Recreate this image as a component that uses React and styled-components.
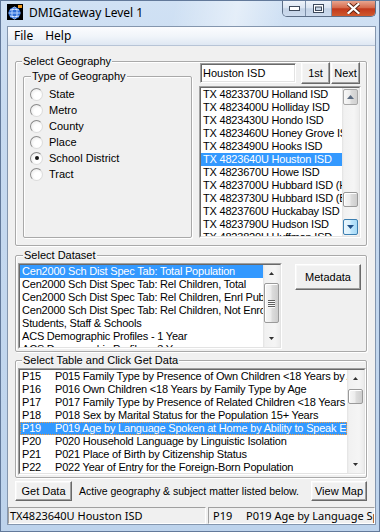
import React from "react";
import styled, { createGlobalStyle, css } from "styled-components";

const ui = `"Liberation Sans", Arial, sans-serif`;
const seg = `"Noto Sans", "Liberation Sans", sans-serif`;

const Global = createGlobalStyle`
  html, body { margin: 0; padding: 0; }
  body { width: 380px; height: 532px; overflow: hidden; background: #c5d9ef; }
  *, *::before, *::after { box-sizing: border-box; }
`;

const Window = styled.div`
  width: 380px;
  height: 532px;
  border: 1px solid #62799a;
  background: linear-gradient(to bottom, #d0e1f4 0px, #c7daf0 120px, #bdd3ec 100%);
  padding: 0 3px 6px 6px;
  display: flex;
  flex-direction: column;
`;

const TitleBar = styled.div`
  height: 25px;
  flex: none;
  display: flex;
  align-items: flex-start;
  background: linear-gradient(100deg, rgba(255,255,255,0) 0%, rgba(255,255,255,0) 45%, rgba(255,255,255,0.45) 62%, rgba(255,255,255,0) 75%);
`;

const AppIcon = styled.svg`
  flex: none;
  margin-top: 3px;
  width: 16px;
  height: 16px;
`;

const Title = styled.div`
  margin-left: 6px;
  margin-top: 3px;
  font: 12px/17px ${seg};
  color: #000;
  white-space: nowrap;
`;

const CaptionGroup = styled.div`
  margin-left: auto;
  display: flex;
  height: 16px;
  border: 1px solid #5d6f88;
  border-top: none;
  border-radius: 0 0 5px 5px;
  overflow: hidden;
`;

const CapBtn = styled.div`
  width: ${(p) => p.$w}px;
  height: 100%;
  display: flex;
  align-items: center;
  justify-content: center;
  ${(p) =>
    p.$close
      ? css`
          background: linear-gradient(to bottom, #e9a58f 0%, #d66a4c 45%, #c2391c 52%, #cf5a2e 100%);
        `
      : css`
          background: linear-gradient(to bottom, #eef3fa 0%, #dbe5f2 45%, #c4d3e6 52%, #ccdbee 100%);
          border-right: 1px solid #7d8fa8;
        `}
`;

const Client = styled.div`
  flex: 1;
  display: flex;
  flex-direction: column;
  border: 1px solid #8496ae;
  background: #f0f0f0;
  min-height: 0;
`;

const MenuBar = styled.div`
  height: 19px;
  flex: none;
  display: flex;
  align-items: center;
  background: linear-gradient(to bottom, #fbfcfe 0%, #f1f5fa 50%, #dfe8f3 100%);
  border-bottom: 1px solid #b7c4d6;
`;

const MenuItem = styled.div`
  padding: 0 6px;
  font: 12px/18px ${seg};
  color: #000;
`;

const Content = styled.div`
  flex: 1;
  display: flex;
  flex-direction: column;
  padding: 15px 8px 6px 7px;
  min-height: 0;
`;

const GroupBox = styled.div`
  position: relative;
  flex: none;
  display: flex;
  align-items: ${(p) => p.$align || "stretch"};
  border: 1px solid #a9a9a9;
  border-radius: 2px;
  box-shadow: inset 1px 1px 0 #fff, 1px 1px 0 #fff;
  padding: ${(p) => p.$pad};
  margin-top: ${(p) => p.$mt || 0}px;
`;

const Legend = styled.span`
  position: absolute;
  top: -7px;
  left: ${(p) => p.$left}px;
  padding: 0 1px;
  background: #f0f0f0;
  font: 11px/13px ${ui};
  color: #000;
  white-space: nowrap;
`;

const TypeBox = styled(GroupBox)`
  flex-direction: column;
  align-items: stretch;
  width: 169px;
  margin-top: 14px;
`;

const RadioRow = styled.div`
  height: 16px;
  display: flex;
  align-items: center;
  gap: 6px;
  font: 11px/13px ${ui};
  color: #000;
`;

const RadioCircle = styled.span`
  width: 13px;
  height: 13px;
  flex: none;
  border-radius: 50%;
  border: 1px solid;
  border-color: #8a8a8a #dcdcdc #dcdcdc #8a8a8a;
  background: radial-gradient(circle at 60% 60%, #ffffff 35%, #ededed 75%, #d6d6d6 100%);
  display: flex;
  align-items: center;
  justify-content: center;
  &::after {
    content: "";
    width: 4px;
    height: 4px;
    border-radius: 50%;
    background: ${(p) => (p.$checked ? "#161616" : "transparent")};
  }
`;

const RightCol = styled.div`
  flex: 1;
  display: flex;
  flex-direction: column;
  min-width: 0;
  margin-left: 7px;
`;

const SearchRow = styled.div`
  height: 22px;
  display: flex;
  align-items: flex-start;
  margin-bottom: 2px;
`;

const TextInput = styled.div`
  width: 96px;
  height: 20px;
  margin: 1px 0 0 1px;
  border: 1px solid;
  border-color: #a0a0a0 #fff #fff #a0a0a0;
  box-shadow: inset 1px 1px 0 #696969, inset -1px -1px 0 #e3e3e3;
  background: #fff;
  padding: 0 2px;
  font: 11px/18px ${ui};
  color: #000;
  white-space: nowrap;
`;

const Button = styled.div`
  flex: none;
  width: ${(p) => p.$w}px;
  height: ${(p) => p.$h}px;
  margin-left: ${(p) => (p.$push ? "auto" : `${p.$ml || 0}px`)};
  margin-top: ${(p) => p.$mt || 0}px;
  border: 1px solid;
  border-color: #fff #696969 #696969 #fff;
  box-shadow: inset -1px -1px 0 #a0a0a0, inset 1px 1px 0 #f7f7f7;
  background: #f0f0f0;
  display: flex;
  align-items: center;
  justify-content: center;
  font: 11px/13px ${ui};
  color: #000;
  white-space: nowrap;
`;

const Listbox = styled.div`
  flex: none;
  width: ${(p) => (p.$w ? `${p.$w}px` : "auto")};
  height: ${(p) => p.$h}px;
  border: 1px solid;
  border-color: #a0a0a0 #fff #fff #a0a0a0;
  display: flex;
`;

const ListInner = styled.div`
  flex: 1;
  min-width: 0;
  display: flex;
  border: 1px solid;
  border-color: #696969 #e3e3e3 #e3e3e3 #696969;
  background: #fff;
  overflow: hidden;
`;

const Items = styled.div`
  flex: 1;
  min-width: 0;
  overflow: hidden;
`;

const Item = styled.div`
  height: 13px;
  display: flex;
  padding-left: 2px;
  font: 11px/13px ${ui};
  letter-spacing: -0.2px;
  white-space: nowrap;
  overflow: hidden;
  color: ${(p) => (p.$sel ? "#fff" : "#000")};
  background: ${(p) => (p.$sel ? "#3399ff" : "transparent")};
  ${(p) =>
    p.$focus &&
    css`
      outline: 1px dotted #f59a3c;
      outline-offset: -1px;
    `}
`;

const Code = styled.span`
  flex: none;
  width: 33px;
`;

const SB = styled.div`
  width: 17px;
  flex: none;
  display: flex;
  flex-direction: column;
  background: linear-gradient(to right, #e2e2e2 0px, #f1f1f1 2px, #f5f5f5 12px, #ebebeb 17px);
`;

const SBButton = styled.div`
  height: 17px;
  flex: none;
  display: flex;
  align-items: center;
  justify-content: center;
  ${(p) =>
    p.$look === "hover" &&
    css`
      margin: 1px 1px 0 1px;
      height: 16px;
      border: 1px solid #a7a7a7;
      border-radius: 2px;
      background: linear-gradient(to right, #f8f8f8 0%, #ececec 45%, #dcdcdc 55%, #d0d0d0 100%);
    `}
  ${(p) =>
    p.$look === "hot" &&
    css`
      margin: 0 1px 1px 1px;
      height: 16px;
      border: 1px solid #3c7fb1;
      border-radius: 2px;
      background: linear-gradient(to right, #eaf6fd 0%, #d9f0fc 45%, #bee6fd 55%, #a7d9f5 100%);
    `}
`;

const SBTrack = styled.div`
  flex: 1;
  min-height: 0;
  display: flex;
  flex-direction: column;
`;

const SBThumb = styled.div`
  margin: ${(p) => p.$offset}px 1px 0 1px;
  height: ${(p) => p.$size}px;
  flex: none;
  border: 1px solid #9a9a9a;
  border-radius: 2px;
  background: linear-gradient(to right, #f7f7f7 0%, #ececec 45%, #dcdcdc 55%, #cdcdcd 100%);
  box-shadow: inset 1px 1px 0 #fff;
  display: flex;
  flex-direction: column;
  align-items: center;
  justify-content: center;
  gap: 1px;
`;

const Grip = styled.span`
  width: 7px;
  height: 1px;
  background: #5e5e5e;
  box-shadow: 0 1px 0 #fafafa;
`;

const DatasetRow = styled.div`
  display: flex;
  align-items: flex-start;
`;

const ActionRow = styled.div`
  height: 20px;
  flex: none;
  margin-top: 3px;
  display: flex;
  align-items: center;
`;

const Hint = styled.span`
  margin-left: 7px;
  font: 10.5px/13px ${ui};
  color: #000;
  white-space: nowrap;
`;

const StatusBar = styled.div`
  height: 17px;
  flex: none;
  display: flex;
  gap: 2px;
  background: #f0f0f0;
`;

const StatusPanel = styled.div`
  flex: ${(p) => (p.$w ? "none" : 1)};
  width: ${(p) => (p.$w ? `${p.$w}px` : "auto")};
  min-width: 0;
  display: flex;
  border: 1px solid;
  border-color: #a0a0a0 #fff #fff #a0a0a0;
  padding-left: ${(p) => p.$pl}px;
  font: 11px/15px ${seg};
  color: #000;
  white-space: nowrap;
  overflow: hidden;
`;

const Arrow = ({ dir, w = 7, h = 4, color = "#4d5d73" }) => (
  <svg width={w} height={h} viewBox={`0 0 ${w} ${h}`}>
    <path d={dir === "up" ? `M0 ${h} L${w / 2} 0 L${w} ${h} Z` : `M0 0 L${w} 0 L${w / 2} ${h} Z`} fill={color} />
  </svg>
);

const Scrollbar = ({ look, hotDown, offset, size, grip }) => (
  <SB>
    <SBButton $look={look}>
      {look === "hover" ? <Arrow dir="up" color="#5a6a80" /> : <Arrow dir="up" w={5} h={3} color="#303030" />}
    </SBButton>
    <SBTrack>
      <SBThumb $offset={offset} $size={size}>
        {grip && (
          <>
            <Grip />
            <Grip />
            <Grip />
            <Grip />
          </>
        )}
      </SBThumb>
    </SBTrack>
    <SBButton $look={hotDown ? "hot" : look}>
      {look === "hover" ? <Arrow dir="down" color="#1f4f86" /> : <Arrow dir="down" w={5} h={3} color="#303030" />}
    </SBButton>
  </SB>
);

const geo = [
  "TX 4823370U Holland ISD",
  "TX 4823400U Holliday ISD",
  "TX 4823430U Hondo ISD",
  "TX 4823460U Honey Grove ISD",
  "TX 4823490U Hooks ISD",
  "TX 4823640U Houston ISD",
  "TX 4823670U Howe ISD",
  "TX 4823700U Hubbard ISD (Hill)",
  "TX 4823730U Hubbard ISD (Bowie)",
  "TX 4823760U Huckabay ISD",
  "TX 4823790U Hudson ISD",
  "TX 4823820U Huffman ISD",
];

const datasets = [
  "Cen2000 Sch Dist Spec Tab: Total Population",
  "Cen2000 Sch Dist Spec Tab: Rel Children, Total",
  "Cen2000 Sch Dist Spec Tab: Rel Children, Enrl Public School",
  "Cen2000 Sch Dist Spec Tab: Rel Children, Not Enrolled",
  "Students, Staff & Schools",
  "ACS Demographic Profiles - 1 Year",
  "ACS Demographic Profiles - 3 Year",
];

const tables = [
  ["P15", "P015 Family Type by Presence of Own Children <18 Years by Age of Own Children"],
  ["P16", "P016 Own Children <18 Years by Family Type by Age"],
  ["P17", "P017 Family Type by Presence of Related Children <18 Years by Age"],
  ["P18", "P018 Sex by Marital Status for the Population 15+ Years"],
  ["P19", "P019 Age by Language Spoken at Home by Ability to Speak English"],
  ["P20", "P020 Household Language by Linguistic Isolation"],
  ["P21", "P021 Place of Birth by Citizenship Status"],
  ["P22", "P022 Year of Entry for the Foreign-Born Population"],
];

const radios = ["State", "Metro", "County", "Place", "School District", "Tract"];

export default function App() {
  return (
    <>
      <Global />
      <Window>
        <TitleBar>
          <AppIcon viewBox="0 0 16 16">
            <rect x="0" y="0" width="16" height="16" fill="#000" />
            <circle cx="7.5" cy="9" r="6" fill="#2f6fd8" />
            <ellipse cx="7.5" cy="9" rx="2.6" ry="6" fill="none" stroke="#b9d4ff" strokeWidth="1" />
            <line x1="1.5" y1="9" x2="13.5" y2="9" stroke="#b9d4ff" strokeWidth="1" />
            <path d="M3 6 Q7.5 4.5 12 6" fill="none" stroke="#dfeaff" strokeWidth="1" />
            <path d="M3 12 Q7.5 13.5 12 12" fill="none" stroke="#dfeaff" strokeWidth="1" />
            <rect x="11" y="1" width="4" height="3" fill="#f29a1c" />
          </AppIcon>
          <Title>DMIGateway Level 1</Title>
          <CaptionGroup>
            <CapBtn $w={23}>
              <svg width="11" height="5" viewBox="0 0 11 5">
                <rect x="0.5" y="0.5" width="10" height="4" fill="#fff" stroke="#3e4a5c" />
              </svg>
            </CapBtn>
            <CapBtn $w={26}>
              <svg width="11" height="9" viewBox="0 0 11 9">
                <rect x="0.5" y="0.5" width="10" height="8" fill="#fff" stroke="#3e4a5c" />
                <rect x="2.5" y="3" width="6" height="3.5" fill="#c9d6e6" stroke="#3e4a5c" />
              </svg>
            </CapBtn>
            <CapBtn $w={43} $close>
              <svg width="13" height="11" viewBox="0 0 13 11">
                <path d="M1.5 1 L11.5 10 M11.5 1 L1.5 10" stroke="#5a2110" strokeWidth="4" strokeLinecap="square" />
                <path d="M1.5 1 L11.5 10 M11.5 1 L1.5 10" stroke="#fff" strokeWidth="2.2" strokeLinecap="square" />
              </svg>
            </CapBtn>
          </CaptionGroup>
        </TitleBar>

        <Client>
          <MenuBar>
            <MenuItem>File</MenuItem>
            <MenuItem>Help</MenuItem>
          </MenuBar>

          <Content>
            <GroupBox $pad="0 5px 7px 7px" $align="stretch">
              <Legend $left={6}>Select Geography</Legend>
              <TypeBox $pad="9px 0 0 6px">
                <Legend $left={7}>Type of Geography</Legend>
                {radios.map((r) => (
                  <RadioRow key={r}>
                    <RadioCircle $checked={r === "School District"} />
                    {r}
                  </RadioRow>
                ))}
              </TypeBox>
              <RightCol>
                <SearchRow>
                  <TextInput>Houston ISD</TextInput>
                  <Button $w={29} $h={22} $ml={5}>1st</Button>
                  <Button $w={29} $h={22} $ml={1}>Next</Button>
                </SearchRow>
                <Listbox $h={152}>
                  <ListInner>
                    <Items>
                      {geo.map((g) => (
                        <Item key={g} $sel={g.includes("Houston")}>
                          {g}
                        </Item>
                      ))}
                    </Items>
                    <Scrollbar look="hover" hotDown offset={87} size={15} />
                  </ListInner>
                </Listbox>
              </RightCol>
            </GroupBox>

            <GroupBox $pad="7px 5px 2px 2px" $mt={9}>
              <Legend $left={7}>Select Dataset</Legend>
              <DatasetRow>
                <Listbox $w={264} $h={86}>
                  <ListInner>
                    <Items>
                      {datasets.map((d, i) => (
                        <Item key={d} $sel={i === 0}>
                          {d}
                        </Item>
                      ))}
                    </Items>
                    <Scrollbar look="plain" offset={1} size={40} grip />
                  </ListInner>
                </Listbox>
                <Button $w={66} $h={26} $ml={13} $mt={1}>Metadata</Button>
              </DatasetRow>
            </GroupBox>

            <GroupBox $pad="7px 0 2px 2px" $mt={8} $align="flex-start">
              <Legend $left={6}>Select Table and Click Get Data</Legend>
              <Listbox $w={348} $h={107}>
                <ListInner>
                  <Items>
                    {tables.map(([c, t]) => (
                      <Item key={c} $sel={c === "P19"} $focus={c === "P19"}>
                        <Code>{c}</Code>
                        {t}
                      </Item>
                    ))}
                  </Items>
                  <Scrollbar look="plain" offset={2} size={15} />
                </ListInner>
              </Listbox>
            </GroupBox>

            <ActionRow>
              <Button $w={57} $h={20}>Get Data</Button>
              <Hint>Active geography &amp; subject matter listed below.</Hint>
              <Button $w={56} $h={20} $push>View Map</Button>
            </ActionRow>
          </Content>

          <StatusBar>
            <StatusPanel $w={198} $pl={1}>TX4823640U Houston ISD</StatusPanel>
            <StatusPanel $pl={4}>
              <Code>P19</Code>P019 Age by Language Spoken at Home by Ability to Speak English
            </StatusPanel>
          </StatusBar>
        </Client>
      </Window>
    </>
  );
}
